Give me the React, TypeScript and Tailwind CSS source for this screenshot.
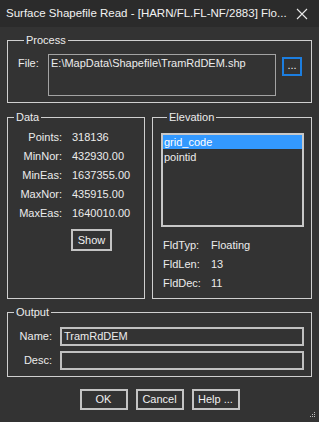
import React from 'react';

const dataRows = [
  ['Points:', '318136'],
  ['MinNor:', '432930.00'],
  ['MinEas:', '1637355.00'],
  ['MaxNor:', '435915.00'],
  ['MaxEas:', '1640010.00'],
];

const fieldRows = [
  ['FldTyp:', 'Floating'],
  ['FldLen:', '13'],
  ['FldDec:', '11'],
];

const Group: React.FC<{ title: string; className?: string; children: React.ReactNode }> = ({ title, className, children }) => (
  <fieldset className={`border border-[#cfcfcf] m-0 min-w-0 ${className ?? ''}`}>
    <legend className="ml-[6px] px-[2px] text-[11px] leading-[14px]">{title}</legend>
    {children}
  </fieldset>
);

const Btn: React.FC<{ label: string; className?: string }> = ({ label, className }) => (
  <button className={`border-2 border-[#c4c4c4] bg-[#333333] text-[11px] leading-none text-[#f0f0f0] ${className ?? ''}`}>
    {label}
  </button>
);

export default function App() {
  return (
    <div className="w-[319px] h-[422px] bg-[#333333] text-[#ececec] font-['Liberation_Sans',Arial,sans-serif] overflow-hidden flex flex-col">
      <div className="h-[27px] bg-[#2b2b2b] flex items-center justify-between pl-[6px] pr-[11px] shrink-0">
        <span className="text-[11.5px] text-[#f2f2f2] whitespace-nowrap">Surface Shapefile Read - [HARN/FL.FL-NF/2883] Flo...</span>
        <svg width="12" height="12" viewBox="0 0 12 12" className="shrink-0">
          <path d="M1 1 L11 11 M11 1 L1 11" stroke="#e8e8e8" strokeWidth="1.1" fill="none" />
        </svg>
      </div>

      <div className="flex-1 px-[7px] pt-[6px] flex flex-col relative">
        <Group title="Process" className="pl-[10px] pr-[9px] pt-[7px] pb-[6px]">
          <div className="flex items-start">
            <span className="w-[30px] mt-[2px] text-[11px] leading-[14px]">File:</span>
            <div className="w-[228px] h-[42px] border border-[#a3a3a3] px-[2px] pt-[1px] text-[11px] leading-[14px]">
              E:\MapData\Shapefile\TramRdDEM.shp
            </div>
            <button className="ml-[6px] mt-[3px] w-[20px] h-[19px] border-2 border-[#1c7ee0] flex items-end justify-center pb-[3px] text-[11px] leading-none text-[#f0f0f0]">
              ...
            </button>
          </div>
        </Group>

        <div className="flex gap-[7px] mt-[7px]">
          <Group title="Data" className="w-[138px] h-[189px] pt-[4px]">
            <div className="grid grid-cols-[54px_1fr] gap-x-[10px] text-[11px] leading-[19px]">
              {dataRows.map(([k, v]) => (
                <React.Fragment key={k}>
                  <span className="text-right">{k}</span>
                  <span>{v}</span>
                </React.Fragment>
              ))}
            </div>
            <Btn label="Show" className="ml-[63px] mt-[6px] w-[41px] h-[22px]" />
          </Group>

          <Group title="Elevation" className="flex-1 h-[189px] pl-[8px] pt-[9px]">
            <div className="w-[143px] h-[94px] border-2 border-[#c8c8c8] text-[11px] leading-[14px]">
              <div className="bg-[#3399ff] text-white pl-[1px]">grid_code</div>
              <div className="pl-[1px] mt-[1px]">pointid</div>
            </div>
            <div className="grid grid-cols-[48px_1fr] mt-[9px] pl-[2px] text-[11px] leading-[19px]">
              {fieldRows.map(([k, v]) => (
                <React.Fragment key={k}>
                  <span>{k}</span>
                  <span>{v}</span>
                </React.Fragment>
              ))}
            </div>
          </Group>
        </div>

        <Group title="Output" className="mt-[6px] pt-[8px] pb-[6px]">
          <div className="flex flex-col gap-[5px] text-[11px]">
            <div className="flex items-center">
              <span className="w-[44px] text-right">Name:</span>
              <div className="ml-[8px] w-[244px] h-[19px] border-2 border-[#c0c0c0] px-[2px] leading-[15px]">TramRdDEM</div>
            </div>
            <div className="flex items-center">
              <span className="w-[44px] text-right">Desc:</span>
              <div className="ml-[8px] w-[244px] h-[19px] border-2 border-[#c0c0c0]" />
            </div>
          </div>
        </Group>

        <div className="flex justify-center gap-[8px] mt-[12px]">
          <Btn label="OK" className="w-[48px] h-[21px]" />
          <Btn label="Cancel" className="w-[48px] h-[21px]" />
          <Btn label="Help ..." className="w-[48px] h-[21px]" />
        </div>

        <svg width="6" height="6" viewBox="0 0 6 6" className="absolute right-[3px] bottom-[4px]">
          <rect x="4" y="0" width="1" height="1" fill="#bdbdbd" />
          <rect x="4" y="2" width="1" height="1" fill="#bdbdbd" />
          <rect x="2" y="2" width="1" height="1" fill="#bdbdbd" />
          <rect x="4" y="4" width="1" height="1" fill="#bdbdbd" />
          <rect x="2" y="4" width="1" height="1" fill="#bdbdbd" />
          <rect x="0" y="4" width="1" height="1" fill="#bdbdbd" />
        </svg>
      </div>
    </div>
  );
}
